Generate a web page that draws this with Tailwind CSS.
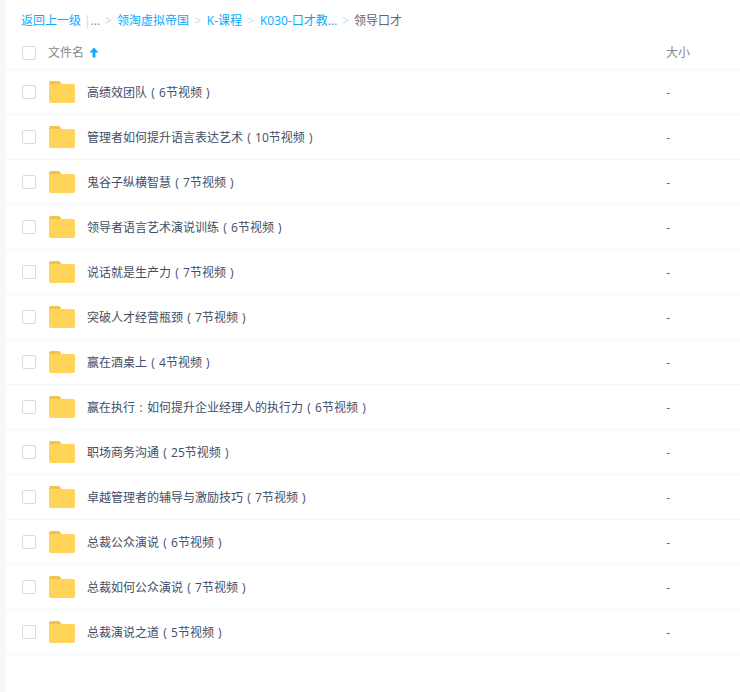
<!DOCTYPE html>
<html lang="zh-CN">
  <head>
    <meta charset="UTF-8" />
    <title>领导口才</title>
    <script src="https://cdn.jsdelivr.net/npm/@tailwindcss/browser@4"></script>
  </head>
  <body class="h-[692px] overflow-hidden bg-white font-['Open_Sans','Noto_Sans_CJK_SC',sans-serif] text-xs text-[#666]">
    <div class="flex h-full">
      <div class="w-[6px] shrink-0 bg-[#f7f7f7]"></div>
      <main class="min-w-0 flex-1">
        <nav class="flex h-[32px] items-end pb-[2px] pl-[15px] leading-[18px] text-[#09aaff]">
          <span>返回上一级</span>
          <span class="ml-[3px] text-[#c4d8f4]">|</span>
          <span class="text-[#888]">...</span>
          <span class="mx-[5px] text-[#c4d8f4]">&gt;</span>
          <span>领淘虚拟帝国</span>
          <span class="mx-[5.5px] text-[#c4d8f4]">&gt;</span>
          <span>K-课程</span>
          <span class="mx-[5.5px] text-[#c4d8f4]">&gt;</span>
          <span>K030-口才教...</span>
          <span class="mx-[5px] text-[#c4d8f4]">&gt;</span>
          <span class="text-[#666]">领导口才</span>
        </nav>

        <div class="flex h-[38px] items-center border-b border-[#f2f6fd] pt-[4px]">
          <span class="ml-[16px] h-[14px] w-[14px] rounded-[2px] border border-[#d5dbe5]"></span>
          <span class="ml-[12px] text-[#888]">文件名</span>
          <svg class="ml-[5px]" width="10" height="11" viewBox="0 0 10 11">
            <path d="M5 0.5 L9.5 5.5 H6.4 V10.5 H3.6 V5.5 H0.5 Z" fill="#09aaff" />
          </svg>
          <span class="ml-auto mr-[50px] text-[#888]">大小</span>
        </div>

        <div id="rows">
          <div class="flex h-[45px] items-center border-b border-[#f2f6fd]">
            <span class="ml-[16px] h-[14px] w-[14px] rounded-[2px] border border-[#d5dbe5]"></span>
            <svg class="ml-[13px]" width="26" height="22" viewBox="0 0 26 22"><path d="M0 2 Q0 0 2 0 H9 Q11 0 12 2 V4 H0 Z" fill="#f0c34f" /><path d="M0 3 H24 Q26 3 26 5 V20 Q26 22 24 22 H2 Q0 22 0 20 Z" fill="#ffd459" /></svg>
            <span class="ml-[12px] pt-[2px] text-[#424e67]">高绩效团队<span class="inline-block w-[12px] text-center">(</span>6节视频<span class="inline-block w-[12px] text-center">)</span></span>
            <span class="ml-auto mr-[70px] pt-[2px] text-[#666]">-</span>
          </div>
          <div class="flex h-[45px] items-center border-b border-[#f2f6fd]">
            <span class="ml-[16px] h-[14px] w-[14px] rounded-[2px] border border-[#d5dbe5]"></span>
            <svg class="ml-[13px]" width="26" height="22" viewBox="0 0 26 22"><path d="M0 2 Q0 0 2 0 H9 Q11 0 12 2 V4 H0 Z" fill="#f0c34f" /><path d="M0 3 H24 Q26 3 26 5 V20 Q26 22 24 22 H2 Q0 22 0 20 Z" fill="#ffd459" /></svg>
            <span class="ml-[12px] pt-[2px] text-[#424e67]">管理者如何提升语言表达艺术<span class="inline-block w-[12px] text-center">(</span>10节视频<span class="inline-block w-[12px] text-center">)</span></span>
            <span class="ml-auto mr-[70px] pt-[2px] text-[#666]">-</span>
          </div>
          <div class="flex h-[45px] items-center border-b border-[#f2f6fd]">
            <span class="ml-[16px] h-[14px] w-[14px] rounded-[2px] border border-[#d5dbe5]"></span>
            <svg class="ml-[13px]" width="26" height="22" viewBox="0 0 26 22"><path d="M0 2 Q0 0 2 0 H9 Q11 0 12 2 V4 H0 Z" fill="#f0c34f" /><path d="M0 3 H24 Q26 3 26 5 V20 Q26 22 24 22 H2 Q0 22 0 20 Z" fill="#ffd459" /></svg>
            <span class="ml-[12px] pt-[2px] text-[#424e67]">鬼谷子纵横智慧<span class="inline-block w-[12px] text-center">(</span>7节视频<span class="inline-block w-[12px] text-center">)</span></span>
            <span class="ml-auto mr-[70px] pt-[2px] text-[#666]">-</span>
          </div>
          <div class="flex h-[45px] items-center border-b border-[#f2f6fd]">
            <span class="ml-[16px] h-[14px] w-[14px] rounded-[2px] border border-[#d5dbe5]"></span>
            <svg class="ml-[13px]" width="26" height="22" viewBox="0 0 26 22"><path d="M0 2 Q0 0 2 0 H9 Q11 0 12 2 V4 H0 Z" fill="#f0c34f" /><path d="M0 3 H24 Q26 3 26 5 V20 Q26 22 24 22 H2 Q0 22 0 20 Z" fill="#ffd459" /></svg>
            <span class="ml-[12px] pt-[2px] text-[#424e67]">领导者语言艺术演说训练<span class="inline-block w-[12px] text-center">(</span>6节视频<span class="inline-block w-[12px] text-center">)</span></span>
            <span class="ml-auto mr-[70px] pt-[2px] text-[#666]">-</span>
          </div>
          <div class="flex h-[45px] items-center border-b border-[#f2f6fd]">
            <span class="ml-[16px] h-[14px] w-[14px] rounded-[2px] border border-[#d5dbe5]"></span>
            <svg class="ml-[13px]" width="26" height="22" viewBox="0 0 26 22"><path d="M0 2 Q0 0 2 0 H9 Q11 0 12 2 V4 H0 Z" fill="#f0c34f" /><path d="M0 3 H24 Q26 3 26 5 V20 Q26 22 24 22 H2 Q0 22 0 20 Z" fill="#ffd459" /></svg>
            <span class="ml-[12px] pt-[2px] text-[#424e67]">说话就是生产力<span class="inline-block w-[12px] text-center">(</span>7节视频<span class="inline-block w-[12px] text-center">)</span></span>
            <span class="ml-auto mr-[70px] pt-[2px] text-[#666]">-</span>
          </div>
          <div class="flex h-[45px] items-center border-b border-[#f2f6fd]">
            <span class="ml-[16px] h-[14px] w-[14px] rounded-[2px] border border-[#d5dbe5]"></span>
            <svg class="ml-[13px]" width="26" height="22" viewBox="0 0 26 22"><path d="M0 2 Q0 0 2 0 H9 Q11 0 12 2 V4 H0 Z" fill="#f0c34f" /><path d="M0 3 H24 Q26 3 26 5 V20 Q26 22 24 22 H2 Q0 22 0 20 Z" fill="#ffd459" /></svg>
            <span class="ml-[12px] pt-[2px] text-[#424e67]">突破人才经营瓶颈<span class="inline-block w-[12px] text-center">(</span>7节视频<span class="inline-block w-[12px] text-center">)</span></span>
            <span class="ml-auto mr-[70px] pt-[2px] text-[#666]">-</span>
          </div>
          <div class="flex h-[45px] items-center border-b border-[#f2f6fd]">
            <span class="ml-[16px] h-[14px] w-[14px] rounded-[2px] border border-[#d5dbe5]"></span>
            <svg class="ml-[13px]" width="26" height="22" viewBox="0 0 26 22"><path d="M0 2 Q0 0 2 0 H9 Q11 0 12 2 V4 H0 Z" fill="#f0c34f" /><path d="M0 3 H24 Q26 3 26 5 V20 Q26 22 24 22 H2 Q0 22 0 20 Z" fill="#ffd459" /></svg>
            <span class="ml-[12px] pt-[2px] text-[#424e67]">赢在酒桌上<span class="inline-block w-[12px] text-center">(</span>4节视频<span class="inline-block w-[12px] text-center">)</span></span>
            <span class="ml-auto mr-[70px] pt-[2px] text-[#666]">-</span>
          </div>
          <div class="flex h-[45px] items-center border-b border-[#f2f6fd]">
            <span class="ml-[16px] h-[14px] w-[14px] rounded-[2px] border border-[#d5dbe5]"></span>
            <svg class="ml-[13px]" width="26" height="22" viewBox="0 0 26 22"><path d="M0 2 Q0 0 2 0 H9 Q11 0 12 2 V4 H0 Z" fill="#f0c34f" /><path d="M0 3 H24 Q26 3 26 5 V20 Q26 22 24 22 H2 Q0 22 0 20 Z" fill="#ffd459" /></svg>
            <span class="ml-[12px] pt-[2px] text-[#424e67]">赢在执行<span class="inline-block w-[12px] text-center">:</span>如何提升企业经理人的执行力<span class="inline-block w-[12px] text-center">(</span>6节视频<span class="inline-block w-[12px] text-center">)</span></span>
            <span class="ml-auto mr-[70px] pt-[2px] text-[#666]">-</span>
          </div>
          <div class="flex h-[45px] items-center border-b border-[#f2f6fd]">
            <span class="ml-[16px] h-[14px] w-[14px] rounded-[2px] border border-[#d5dbe5]"></span>
            <svg class="ml-[13px]" width="26" height="22" viewBox="0 0 26 22"><path d="M0 2 Q0 0 2 0 H9 Q11 0 12 2 V4 H0 Z" fill="#f0c34f" /><path d="M0 3 H24 Q26 3 26 5 V20 Q26 22 24 22 H2 Q0 22 0 20 Z" fill="#ffd459" /></svg>
            <span class="ml-[12px] pt-[2px] text-[#424e67]">职场商务沟通<span class="inline-block w-[12px] text-center">(</span>25节视频<span class="inline-block w-[12px] text-center">)</span></span>
            <span class="ml-auto mr-[70px] pt-[2px] text-[#666]">-</span>
          </div>
          <div class="flex h-[45px] items-center border-b border-[#f2f6fd]">
            <span class="ml-[16px] h-[14px] w-[14px] rounded-[2px] border border-[#d5dbe5]"></span>
            <svg class="ml-[13px]" width="26" height="22" viewBox="0 0 26 22"><path d="M0 2 Q0 0 2 0 H9 Q11 0 12 2 V4 H0 Z" fill="#f0c34f" /><path d="M0 3 H24 Q26 3 26 5 V20 Q26 22 24 22 H2 Q0 22 0 20 Z" fill="#ffd459" /></svg>
            <span class="ml-[12px] pt-[2px] text-[#424e67]">卓越管理者的辅导与激励技巧<span class="inline-block w-[12px] text-center">(</span>7节视频<span class="inline-block w-[12px] text-center">)</span></span>
            <span class="ml-auto mr-[70px] pt-[2px] text-[#666]">-</span>
          </div>
          <div class="flex h-[45px] items-center border-b border-[#f2f6fd]">
            <span class="ml-[16px] h-[14px] w-[14px] rounded-[2px] border border-[#d5dbe5]"></span>
            <svg class="ml-[13px]" width="26" height="22" viewBox="0 0 26 22"><path d="M0 2 Q0 0 2 0 H9 Q11 0 12 2 V4 H0 Z" fill="#f0c34f" /><path d="M0 3 H24 Q26 3 26 5 V20 Q26 22 24 22 H2 Q0 22 0 20 Z" fill="#ffd459" /></svg>
            <span class="ml-[12px] pt-[2px] text-[#424e67]">总裁公众演说<span class="inline-block w-[12px] text-center">(</span>6节视频<span class="inline-block w-[12px] text-center">)</span></span>
            <span class="ml-auto mr-[70px] pt-[2px] text-[#666]">-</span>
          </div>
          <div class="flex h-[45px] items-center border-b border-[#f2f6fd]">
            <span class="ml-[16px] h-[14px] w-[14px] rounded-[2px] border border-[#d5dbe5]"></span>
            <svg class="ml-[13px]" width="26" height="22" viewBox="0 0 26 22"><path d="M0 2 Q0 0 2 0 H9 Q11 0 12 2 V4 H0 Z" fill="#f0c34f" /><path d="M0 3 H24 Q26 3 26 5 V20 Q26 22 24 22 H2 Q0 22 0 20 Z" fill="#ffd459" /></svg>
            <span class="ml-[12px] pt-[2px] text-[#424e67]">总裁如何公众演说<span class="inline-block w-[12px] text-center">(</span>7节视频<span class="inline-block w-[12px] text-center">)</span></span>
            <span class="ml-auto mr-[70px] pt-[2px] text-[#666]">-</span>
          </div>
          <div class="flex h-[45px] items-center border-b border-[#f2f6fd]">
            <span class="ml-[16px] h-[14px] w-[14px] rounded-[2px] border border-[#d5dbe5]"></span>
            <svg class="ml-[13px]" width="26" height="22" viewBox="0 0 26 22"><path d="M0 2 Q0 0 2 0 H9 Q11 0 12 2 V4 H0 Z" fill="#f0c34f" /><path d="M0 3 H24 Q26 3 26 5 V20 Q26 22 24 22 H2 Q0 22 0 20 Z" fill="#ffd459" /></svg>
            <span class="ml-[12px] pt-[2px] text-[#424e67]">总裁演说之道<span class="inline-block w-[12px] text-center">(</span>5节视频<span class="inline-block w-[12px] text-center">)</span></span>
            <span class="ml-auto mr-[70px] pt-[2px] text-[#666]">-</span>
          </div>
        </div>
      </main>
    </div>
  </body>
</html>
